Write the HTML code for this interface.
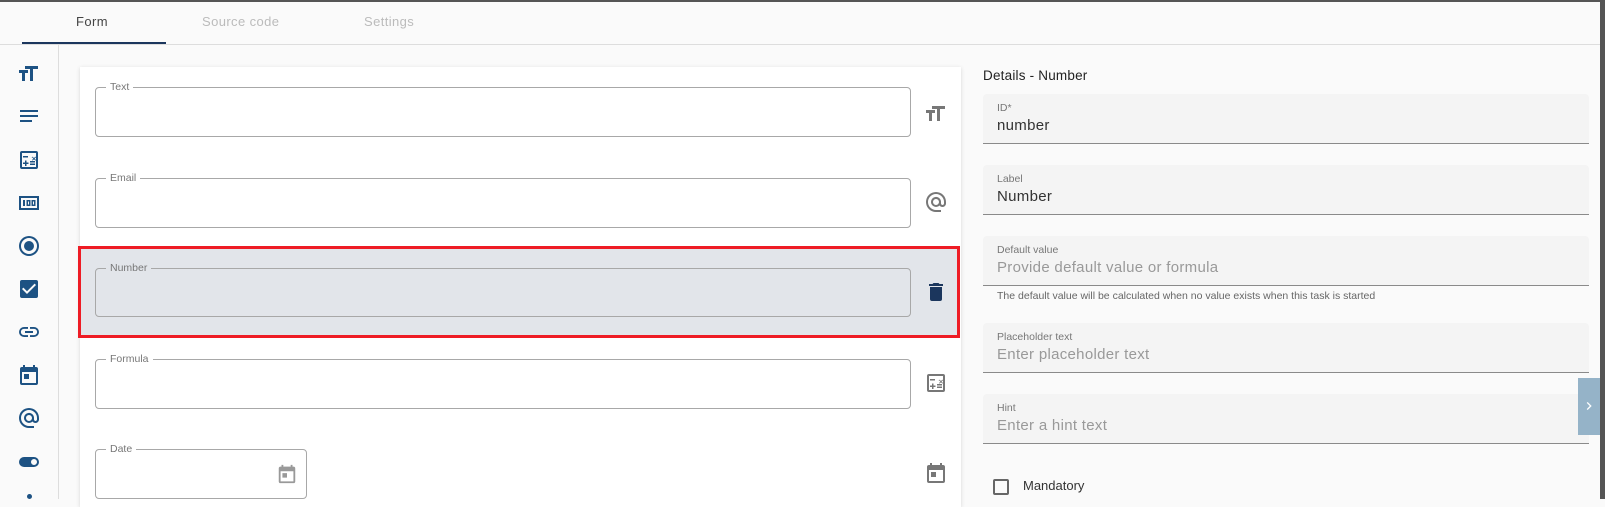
<!DOCTYPE html>
<html><head><meta charset="utf-8"><style>
*{box-sizing:border-box;margin:0;padding:0}
body{width:1605px;height:499px;overflow:hidden;background:#fafafa;font-family:"Liberation Sans",sans-serif;position:relative}
.a{position:absolute}
.tab{position:absolute;top:14px;font-size:13px;letter-spacing:.4px;color:#bbb}
.of{position:absolute;left:95px;width:816px;height:50px;border:1px solid #a8a8a8;border-radius:4px}
.of span{position:absolute;top:-7px;left:10px;background:#fff;padding:0 4px;font-size:10.5px;color:#777;line-height:12px}
.ff{position:absolute;left:983px;width:606px;height:50px;background:#f4f4f4;border-bottom:1px solid #8a8a8a;border-radius:4px 4px 0 0}
.ff .l{position:absolute;left:14px;top:8px;font-size:10.5px;color:#777}
.ff .v{position:absolute;left:14px;top:23px;font-size:15px;color:#999;letter-spacing:.3px}
.ic{position:absolute;left:17px;width:24px;height:24px}
.ri{position:absolute;left:924px;width:24px;height:24px}
</style></head><body>
<div class="a" style="left:0;top:0;width:1605px;height:2px;background:#555"></div>
<div class="a" style="left:0;top:44px;width:1600px;height:1px;background:#ddd"></div>
<div class="tab" style="left:76px;color:#444">Form</div>
<div class="tab" style="left:202px">Source code</div>
<div class="tab" style="left:364px">Settings</div>
<div class="a" style="left:22px;top:42px;width:144px;height:2px;background:#1b365d"></div>
<div class="a" style="left:58px;top:45px;width:1px;height:454px;background:#ddd"></div>
<div class="a" style="left:1600px;top:0;width:5px;height:499px;background:#555"></div>

<svg class="ic" style="top:60px" viewBox="0 0 24 24" fill="#1d5283"><path d="M8 6v3h5v12h3V9h5V6zM2 13h3v8h3v-8h3v-3H2z"/></svg>
<svg class="ic" style="top:104px" viewBox="0 0 24 24" fill="#1d5283"><path d="M3 6h18v2H3zM3 11h18v2H3zM3 16h12v2H3z"/></svg>
<svg class="ic" style="top:148px" viewBox="0 0 24 24" fill="#1d5283"><path d="M19 3H5a2 2 0 0 0-2 2v14a2 2 0 0 0 2 2h14a2 2 0 0 0 2-2V5a2 2 0 0 0-2-2zm0 16H5V5h14zM6 8h5v1.5H6zm7 7.5h5V17h-5zm0-2.5h5v1.5h-5zM8 18h1.5v-2h2v-1.5h-2v-2H8v2H6V16h2zm6-8l1.4-1.4L17 10l1.4-1.4L19 9.2 17.6 10.6 19 12l-.6.6L17 11.2l-1.4 1.4-.6-.6 1.4-1.4L15 9.2z"/></svg>
<svg class="ic" style="top:191px" viewBox="0 0 24 24" fill="#1d5283"><path d="M2 5h20v14H2zm2 2v10h16V7zm2 2h2v6H6zm3.5 0h4v6h-4zm1.5 1.5v3h1v-3zm3.5-1.5h4v6h-4zm1.5 1.5v3h1v-3z"/></svg>
<svg class="ic" style="top:234px" viewBox="0 0 24 24" fill="#1d5283"><path d="M12 2a10 10 0 1 0 0 20 10 10 0 0 0 0-20zm0 18a8 8 0 1 1 0-16 8 8 0 0 1 0 16z"/><circle cx="12" cy="12" r="5"/></svg>
<svg class="ic" style="top:277px" viewBox="0 0 24 24" fill="#1d5283"><path d="M19 3H5a2 2 0 0 0-2 2v14a2 2 0 0 0 2 2h14a2 2 0 0 0 2-2V5a2 2 0 0 0-2-2zm-9 14l-5-5 1.4-1.4 3.6 3.6 7.6-7.6L19 8z"/></svg>
<svg class="ic" style="top:320px" viewBox="0 0 24 24" fill="#1d5283"><path d="M3.9 12c0-1.7 1.4-3.1 3.1-3.1h4V7H7a5 5 0 0 0 0 10h4v-1.9H7c-1.7 0-3.1-1.4-3.1-3.1zM8 13h8v-2H8zm9-6h-4v1.9h4c1.7 0 3.1 1.4 3.1 3.1s-1.4 3.1-3.1 3.1h-4V17h4a5 5 0 0 0 0-10z"/></svg>
<svg class="ic" style="top:363px" viewBox="0 0 24 24" fill="#1d5283"><path d="M19 4h-1V2h-2v2H8V2H6v2H5a2 2 0 0 0-2 2v14a2 2 0 0 0 2 2h14a2 2 0 0 0 2-2V6a2 2 0 0 0-2-2zm0 16H5V9h14zM7 11h5v5H7z"/></svg>
<svg class="ic" style="top:406px" viewBox="0 0 24 24" fill="#1d5283"><path d="M12 2a10 10 0 0 0 0 20h5v-2h-5a8 8 0 1 1 8-8v1.4c0 .8-.7 1.6-1.5 1.6s-1.5-.8-1.5-1.6V12a5 5 0 1 0-1.5 3.5 3.7 3.7 0 0 0 3 1.5c2 0 3.5-1.6 3.5-3.6V12A10 10 0 0 0 12 2zm0 13a3 3 0 1 1 0-6 3 3 0 0 1 0 6z"/></svg>
<svg class="ic" style="top:450px" viewBox="0 0 24 24" fill="#1d5283"><path d="M17 7H7a5 5 0 0 0 0 10h10a5 5 0 0 0 0-10zm0 8a3 3 0 1 1 0-6 3 3 0 0 1 0 6z"/></svg>
<div class="a" style="left:27px;top:494px;width:5px;height:5px;border-radius:3px;background:#1d5283"></div>

<div class="a" style="left:80px;top:67px;width:881px;height:440px;background:#fff;box-shadow:0 1px 4px rgba(0,0,0,.15)"></div>
<div class="of" style="top:87px"><span>Text</span></div>
<div class="of" style="top:178px"><span>Email</span></div>
<div class="a" style="left:78px;top:246px;width:882px;height:92px;border:3px solid #ee1c25;background:#e2e5ea"></div>
<div class="of" style="top:268px;height:49px"><span style="background:#e2e5ea">Number</span></div>
<div class="of" style="top:359px"><span>Formula</span></div>
<div class="of" style="top:449px;width:212px"><span>Date</span>
<svg style="position:absolute;left:180px;top:13px;width:22px;height:22px" viewBox="0 0 24 24" fill="#999"><path d="M19 4h-1V2h-2v2H8V2H6v2H5a2 2 0 0 0-2 2v14a2 2 0 0 0 2 2h14a2 2 0 0 0 2-2V6a2 2 0 0 0-2-2zm0 16H5V9h14zM7 11h5v5H7z"/></svg></div>

<svg class="ri" style="top:100px" viewBox="0 0 24 24" fill="#777"><path d="M8 6v3h5v12h3V9h5V6zM2 13h3v8h3v-8h3v-3H2z"/></svg>
<svg class="ri" style="top:190px" viewBox="0 0 24 24" fill="#777"><path d="M12 2a10 10 0 0 0 0 20h5v-2h-5a8 8 0 1 1 8-8v1.4c0 .8-.7 1.6-1.5 1.6s-1.5-.8-1.5-1.6V12a5 5 0 1 0-1.5 3.5 3.7 3.7 0 0 0 3 1.5c2 0 3.5-1.6 3.5-3.6V12A10 10 0 0 0 12 2zm0 13a3 3 0 1 1 0-6 3 3 0 0 1 0 6z"/></svg>
<svg class="ri" style="top:280px" viewBox="0 0 24 24" fill="#1b365d"><path d="M6 19a2 2 0 0 0 2 2h8a2 2 0 0 0 2-2V7H6zM19 4h-3.5l-1-1h-5l-1 1H5v2h14z"/></svg>
<svg class="ri" style="top:371px" viewBox="0 0 24 24" fill="#777"><path d="M19 3H5a2 2 0 0 0-2 2v14a2 2 0 0 0 2 2h14a2 2 0 0 0 2-2V5a2 2 0 0 0-2-2zm0 16H5V5h14zM6 8h5v1.5H6zm7 7.5h5V17h-5zm0-2.5h5v1.5h-5zM8 18h1.5v-2h2v-1.5h-2v-2H8v2H6V16h2zm6-8l1.4-1.4L17 10l1.4-1.4L19 9.2 17.6 10.6 19 12l-.6.6L17 11.2l-1.4 1.4-.6-.6 1.4-1.4L15 9.2z"/></svg>
<svg class="ri" style="top:461px" viewBox="0 0 24 24" fill="#777"><path d="M19 4h-1V2h-2v2H8V2H6v2H5a2 2 0 0 0-2 2v14a2 2 0 0 0 2 2h14a2 2 0 0 0 2-2V6a2 2 0 0 0-2-2zm0 16H5V9h14zM7 11h5v5H7z"/></svg>

<div class="a" style="left:983px;top:68px;font-size:13.5px;color:#222;letter-spacing:.2px">Details - Number</div>
<div class="ff" style="top:94px"><div class="l">ID*</div><div class="v" style="color:#333">number</div></div>
<div class="ff" style="top:165px"><div class="l">Label</div><div class="v" style="color:#333">Number</div></div>
<div class="ff" style="top:236px"><div class="l">Default value</div><div class="v">Provide default value or formula</div></div>
<div class="a" style="left:997px;top:290px;font-size:10.5px;color:#666">The default value will be calculated when no value exists when this task is started</div>
<div class="ff" style="top:323px"><div class="l">Placeholder text</div><div class="v">Enter placeholder text</div></div>
<div class="ff" style="top:394px"><div class="l">Hint</div><div class="v">Enter a hint text</div></div>
<div class="a" style="left:993px;top:479px;width:16px;height:16px;border:2px solid #666;border-radius:2px"></div>
<div class="a" style="left:1023px;top:478px;font-size:13px;color:#333">Mandatory</div>
<div class="a" style="left:1578px;top:378px;width:22px;height:57px;background:#95b3c8"></div>
<svg class="a" style="left:1581px;top:398px" width="16" height="16" viewBox="0 0 24 24" fill="#fff"><path d="M10 6L8.6 7.4 13.2 12l-4.6 4.6L10 18l6-6z"/></svg>
</body></html>
